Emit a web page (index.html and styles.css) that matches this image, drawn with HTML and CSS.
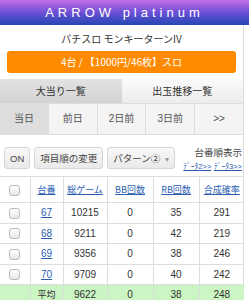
FILE: index.html
```html
<!doctype html>
<html lang="ja">
    <head>
        <meta charset="utf-8"/>
        <title>ARROW platinum</title>
        <link rel="stylesheet" href="styles.css">
    </head>
    <body>
        <header class="topbar">ARROW platinum</header>
        <main class="page">
            <section class="machine">
                <h1 class="machine-name">パチスロ モンキーターンIV</h1>
                <div class="machine-info">4台 / 【1000円/46枚】スロ</div>
            </section>
            <nav class="tabs">
                <a class="tab active">大当り一覧</a>
                <a class="tab">出玉推移一覧</a>
            </nav>
            <nav class="days">
                <a class="day active">当日</a>
                <a class="day">前日</a>
                <a class="day">2日前</a>
                <a class="day">3日前</a>
                <a class="day">&gt;&gt;</a>
            </nav>
            <div class="tools">
                <button class="btn" type="button">ON</button>
                <button class="btn" type="button">項目順の変更</button>
                <button class="btn" type="button">パターン②<span class="caret">▾</span></button>
                <div class="tools-right">
                    <div class="sort-label">台番順表示</div>
                    <div class="data-links"><a>ﾃﾞｰﾀ2&gt;&gt;</a> <a>ﾃﾞｰﾀ3&gt;&gt;</a></div>
                </div>
            </div>
            <table class="data">
                <colgroup>
                    <col style="width:30px">
                    <col style="width:33px">
                    <col style="width:44px">
                    <col style="width:46px">
                    <col style="width:46px">
                    <col style="width:45px">
                </colgroup>
                <thead>
                    <tr>
                        <th><span class="check"></span></th>
                        <th><a>台番</a></th>
                        <th><a>総ゲーム</a></th>
                        <th><a>BB回数</a></th>
                        <th><a>RB回数</a></th>
                        <th><a>合成確率</a></th>
                    </tr>
                </thead>
                <tbody>
                    <tr><td><span class="check"></span></td><td><a>67</a></td><td>10215</td><td>0</td><td>35</td><td>291</td></tr>
                    <tr><td><span class="check"></span></td><td><a>68</a></td><td>9211</td><td>0</td><td>42</td><td>219</td></tr>
                    <tr><td><span class="check"></span></td><td><a>69</a></td><td>9356</td><td>0</td><td>38</td><td>246</td></tr>
                    <tr><td><span class="check"></span></td><td><a>70</a></td><td>9709</td><td>0</td><td>40</td><td>242</td></tr>
                    <tr class="avg"><td></td><td class="jp">平均</td><td>9622</td><td>0</td><td>38</td><td>248</td></tr>
                </tbody>
            </table>
        </main>
    </body>
</html>
```

FILE: styles.css
```css
body {
    margin: 0;
    background-color: #fff;
    color: #333;
    font-family: "Liberation Sans", "Noto Sans CJK JP", sans-serif;
    font-size: 10px;
}

a {
    color: #2a5db0;
    text-decoration: underline;
}

.topbar {
    height: 25px;
    line-height: 25px;
    text-align: center;
    color: #fff;
    font-size: 13px;
    letter-spacing: 4px;
    background: linear-gradient(#c36fe4, #6c4fd6 50%, #2447b3);
}

.page {
    width: 244px;
    border-right: 1px solid #ddd;
    box-sizing: border-box;
}

.machine {
    padding: 6px 7px 6px 7px;
    background: #fff;
}

.machine-name {
    margin: 0;
    font-size: 10px;
    font-weight: normal;
    text-align: center;
    line-height: 16px;
    font-family: "Noto Sans CJK JP", sans-serif;
}

.machine-info {
    margin-top: 4px;
    height: 22px;
    line-height: 22px;
    border-radius: 3px;
    background: #ff8a00;
    color: #fff;
    text-align: center;
    font-family: "Noto Sans CJK JP", sans-serif;
}

.tabs {
    display: flex;
    height: 24px;
}

.tab {
    flex: 1;
    text-align: center;
    line-height: 24px;
    color: #333;
    text-decoration: none;
    font-family: "Noto Sans CJK JP", sans-serif;
    background: linear-gradient(#fafafa, #ececec);
}

.tab.active {
    background: linear-gradient(#e2e2e2, #d3d3d3);
}

.days {
    display: flex;
    height: 30px;
    background: #f4f4f4;
    border-top: 1px solid #ddd;
    border-bottom: 1px solid #ddd;
}

.day {
    flex: 1;
    text-align: center;
    line-height: 30px;
    color: #555;
    text-decoration: none;
    border-left: 1px solid #ddd;
}

.day:first-child {
    border-left: none;
}

.day.active {
    background: #dedede;
}

.tools {
    display: flex;
    align-items: flex-start;
    gap: 4px;
    padding: 7px 1px 3px 4px;
}

.btn {
    margin-top: 5px;
    height: 22px;
    padding: 0 5px;
    border: 1px solid #d6d6d6;
    border-radius: 3px;
    background: linear-gradient(#f8f8f8, #e9e9e9);
    color: #444;
    font-family: "Liberation Sans", "Noto Sans CJK JP", sans-serif;
    font-size: 9.5px;
    white-space: nowrap;
}

.caret {
    margin-left: 5px;
    color: #999;
    font-size: 8px;
}

.tools-right {
    margin-left: auto;
    margin-top: 4px;
    text-align: right;
    line-height: 13px;
    white-space: nowrap;
}

.sort-label {
    color: #444;
    font-size: 9.5px;
}

.data-links a {
    font-size: 7.5px;
}

.data {
    width: 243px;
    table-layout: fixed;
    border-collapse: collapse;
}

.data th,
.data td {
    border: 1px solid #ddd;
    text-align: center;
    padding: 0;
}

.data th {
    height: 25px;
    font-weight: normal;
    font-family: "Noto Sans CJK JP", sans-serif;
    font-size: 9px;
}

.data td {
    height: 19.5px;
    font-size: 10px;
    color: #333;
}

.data tr > :first-child {
    border-left: none;
}

.data tr > :last-child {
    border-right: none;
}

.check {
    display: inline-block;
    width: 9px;
    height: 9px;
    border: 1px solid #bbb;
    border-radius: 3px;
    background: linear-gradient(#fff, #e8e8e8);
    vertical-align: middle;
}

.avg td {
    background: #ccf5c4;
}

.avg .jp {
    font-family: "Noto Sans CJK JP", sans-serif;
    font-size: 9px;
}
```
